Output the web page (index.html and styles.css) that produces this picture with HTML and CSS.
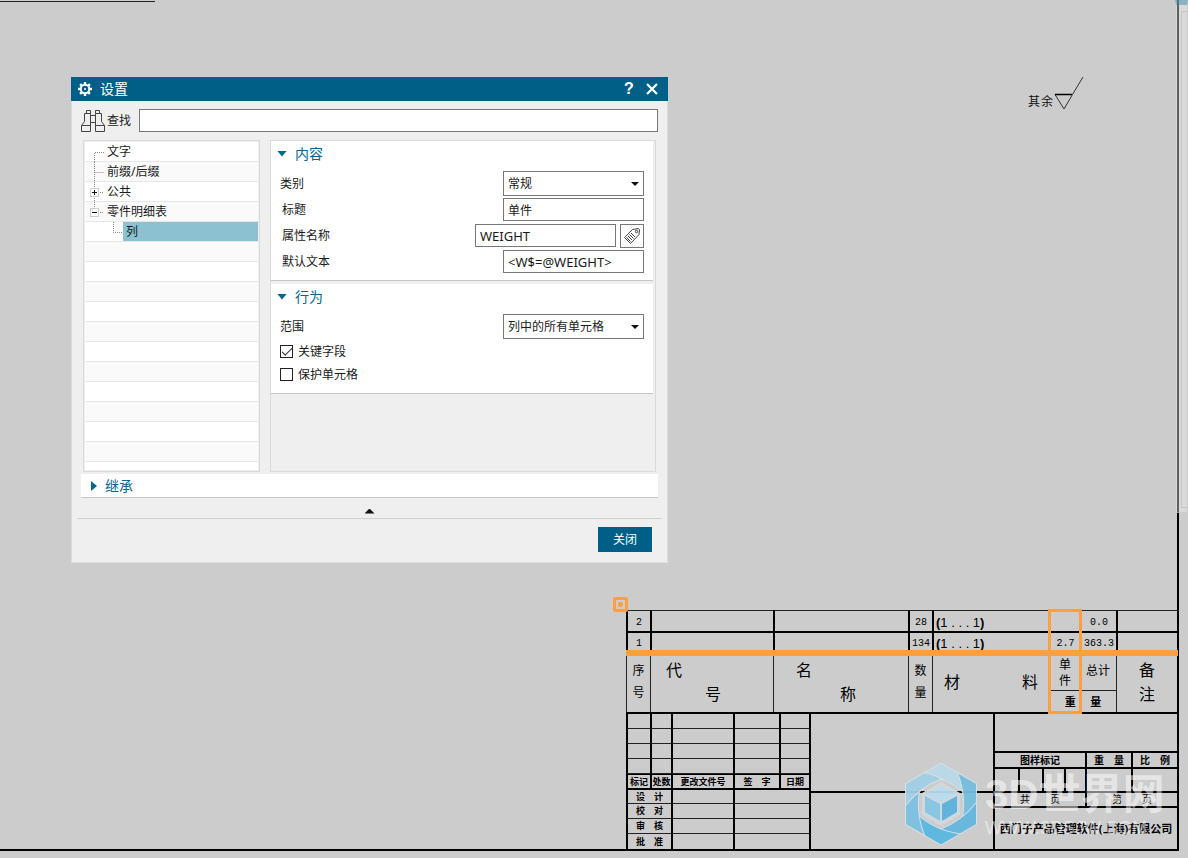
FILE: index.html
```html
<!DOCTYPE html>
<html lang="zh-CN">
<head>
<meta charset="utf-8">
<title>设置</title>
<link rel="stylesheet" href="styles.css">
</head>
<body>
<main class="sheet">
  <div class="border-tab"></div>

  <form class="dialog" aria-labelledby="dialog-title">
    <header class="titlebar">
      <svg class="gear" viewBox="0 0 14 14" width="14" height="14" aria-hidden="true">
        <g stroke="#fff" stroke-width="2.4"><path d="M7 0V14M0 7H14M2.1 2.1L11.9 11.9M11.9 2.1L2.1 11.9"/></g>
        <circle cx="7" cy="7" r="4.2" fill="#005f87" stroke="#fff" stroke-width="2"/>
        <circle cx="7" cy="7" r="1" fill="#fff"/>
      </svg>
      <h1 id="dialog-title">设置</h1>
      <button type="button" class="title-button help" aria-label="帮助">?</button>
      <button type="button" class="title-button" aria-label="关闭窗口">
        <svg viewBox="0 0 12 12" width="12" height="12"><path d="M1 1L11 11M11 1L1 11" stroke="#fff" stroke-width="2.2"/></svg>
      </button>
    </header>

    <div class="search">
      <svg viewBox="0 0 24 22" width="24" height="22" aria-hidden="true" fill="none" stroke="#444" stroke-width="1">
        <path d="M5.500 3.500V.5H9.500V3.500M3.500 3.500H9.500V21.500H.5V15.500L3.500 11.500ZM.5 15.500H9.500M14.500 3.500V.5H18.500V3.500M14.500 3.500H20.500V11.500L23.500 15.500V21.500H14.500ZM14.500 15.500H23.500M9.500 5.500H14.500M9.500 12.500H14.500"/>
      </svg>
      <label for="find">查找</label>
      <input id="find" type="text">
    </div>

    <div class="panes">
      <ul class="tree">
        <li><svg class="twig" viewBox="0 0 22 20"><path d="M9.500 20V10.500H19"/></svg>文字</li>
        <li><svg class="twig" viewBox="0 0 22 20"><path d="M9.500 0V20M9.500 10.500H19"/></svg>前缀/后缀</li>
        <li><svg class="twig" viewBox="0 0 22 20"><path d="M9.500 0V20M15 10.500H19"/><rect x="5.500" y="6.500" width="8" height="8"/><path class="sign" d="M7 10.500H12M9.500 8V13"/></svg>公共</li>
        <li><svg class="twig" viewBox="0 0 22 20"><path d="M9.500 0V6M15 10.500H19"/><rect x="5.500" y="6.500" width="8" height="8"/><path class="sign" d="M7 10.500H12"/></svg>零件明细表</li>
        <li><svg class="twig child" viewBox="0 0 38 20"><path d="M28.500 0V10.500H37"/></svg><span class="selected">列</span></li>
      </ul>

      <div class="pages">
        <section class="group">
          <h2><span class="marker"></span>内容</h2>
          <div class="field">
            <label for="category">类别</label>
            <span class="choice"><select id="category"><option>常规</option></select></span>
          </div>
          <div class="field indented">
            <label for="caption">标题</label>
            <input id="caption" type="text" value="单件">
          </div>
          <div class="field indented">
            <label for="attribute">属性名称</label>
            <input id="attribute" class="latin" type="text" value="WEIGHT">
            <button type="button" class="tag" aria-label="选择属性">
              <svg viewBox="0 0 18 18" width="18" height="18" fill="none" stroke="#444" stroke-width="1">
                <path d="M9.500 2.500L15.500 1.500L16.500 3L16 7.500L7.500 16.500L1.500 10.500Z"/><circle cx="13.500" cy="4.500" r="1.200"/>
                <path d="M3.500 10.500L7.500 14.500M5 9L9 13M6.500 7.500L10.500 11.500M8 6L12 10"/>
              </svg>
            </button>
          </div>
          <div class="field indented">
            <label for="default-text">默认文本</label>
            <input id="default-text" class="latin" type="text" value="&lt;W$=@WEIGHT&gt;">
          </div>
        </section>

        <section class="group">
          <h2><span class="marker"></span>行为</h2>
          <div class="field">
            <label for="scope">范围</label>
            <span class="choice"><select id="scope"><option>列中的所有单元格</option></select></span>
          </div>
          <label class="check"><input type="checkbox" checked>关键字段</label>
          <label class="check"><input type="checkbox">保护单元格</label>
        </section>
      </div>
    </div>

    <h2 class="inherit"><span class="marker closed"></span>继承</h2>
    <div class="collapse"><span class="up"></span></div>
    <footer><button type="button" class="close">关闭</button></footer>
  </form>

  <div class="roughness">
    <span>其</span><span>余</span>
    <svg viewBox="0 0 30 36" width="30" height="36" aria-hidden="true"><g fill="none" stroke="#333"><path d="M1 18.500H18.500L10 33ZM18.500 18.500L29 1"/><path d="M1 18.500H18" stroke="#000" stroke-width="1.500"/></g></svg>
  </div>

  <div class="drawing">
    <table class="parts">
      <colgroup><col class="c24"><col class="c123"><col class="c135"><col class="c24"><col class="c117"><col class="c31"><col class="c36"><col></colgroup>
      <tbody>
        <tr><td>2</td><td></td><td></td><td>28</td><td class="range"><b>(</b>1 . . . 1<b>)</b></td><td></td><td>0.0</td><td></td></tr>
        <tr><td>1</td><td></td><td></td><td>134</td><td class="range"><b>(</b>1 . . . 1<b>)</b></td><td>2.7</td><td>363.3</td><td></td></tr>
      </tbody>
      <tfoot>
        <tr>
          <th rowspan="2" class="small">序<br>号</th>
          <th rowspan="2"><div class="stagger"><span>代</span><span>号</span></div></th>
          <th rowspan="2"><div class="stagger wide"><span>名</span><span>称</span></div></th>
          <th rowspan="2" class="small">数<br>量</th>
          <th rowspan="2"><div class="spread"><span>材</span><span>料</span></div></th>
          <th class="unit">单<br>件</th>
          <th class="total">总计</th>
          <th rowspan="2" class="note">备<br>注</th>
        </tr>
        <tr><th colspan="2" class="weight"><div><span>重</span><span>量</span></div></th></tr>
      </tfoot>
    </table>

    <div class="title-block">
      <table class="revisions">
        <colgroup><col class="c24"><col class="c21"><col class="c62"><col class="c46"><col></colgroup>
        <tr><td></td><td></td><td></td><td></td><td></td></tr>
        <tr><td></td><td></td><td></td><td></td><td></td></tr>
        <tr><td></td><td></td><td></td><td></td><td></td></tr>
        <tr><td></td><td></td><td></td><td></td><td></td></tr>
        <tr class="heads"><th>标记</th><th>处数</th><th>更改文件号</th><th>签　字</th><th>日期</th></tr>
        <tr class="heads"><th colspan="2">设　计</th><td></td><td colspan="2"></td></tr>
        <tr><th colspan="2">校　对</th><td></td><td colspan="2"></td></tr>
        <tr><th colspan="2">审　核</th><td></td><td colspan="2"></td></tr>
        <tr><th colspan="2">批　准</th><td></td><td colspan="2"></td></tr>
      </table>
      <div class="middle"><div></div><div></div></div>
      <div class="company">
        <div class="blank"></div>
        <div class="marks heading"><span>图样标记</span><span>重　量</span><span>比　例</span></div>
        <div class="marks stage"><div class="quarters"><i></i><i></i><i></i><i></i></div><span></span><span></span></div>
        <div class="pagination"><span>共　　页</span><span>第　　页</span></div>
        <div class="name">西门子产品管理软件(上海)有限公司</div>
      </div>
    </div>

    <div class="column-highlight"></div>
    <div class="row-highlight"></div>
    <div class="handle"></div>
  </div>
</main>

<aside class="ghost-window"><div></div></aside>

<div class="watermark">
  <svg viewBox="0 0 72 82" width="72" height="82" aria-hidden="true">
    <defs><path id="petal" d="M17 11L36 0L55 11Q58 20 58 29Q42 15 17 11Z" stroke="#d8e2e6" stroke-width="1"/></defs>
    <use href="#petal" fill="#bad9e7"/>
    <use href="#petal" fill="#76bee0" transform="rotate(60 36 41)"/>
    <use href="#petal" fill="#64b6de" transform="rotate(120 36 41)"/>
    <use href="#petal" fill="#5ab7e2" transform="rotate(180 36 41)"/>
    <use href="#petal" fill="#7cc0e2" transform="rotate(240 36 41)"/>
    <use href="#petal" fill="#a1cfe5" transform="rotate(300 36 41)"/>
    <path d="M36 19L55 30V52L36 63L17 52V30Z" fill="#d0dade"/>
    <path d="M36 23L51 31L36 39L21 31Z" fill="#b8dced"/>
    <path d="M20 33L35 41V58L20 49Z" fill="#86c6e5"/>
    <path d="M52 33L37 41V58L52 49Z" fill="#5cb2dc"/>
  </svg>
  <div class="brand"><strong>3D世界网</strong><span>WWW.3DSJW.COM</span></div>
</div>
</body>
</html>
```

FILE: styles.css
```css
* { box-sizing: border-box; }

body {
  margin: 0;
  background: #ccc;
  color: #1a1a1a;
  font: 12px/18px "Noto Sans", "Noto Sans CJK SC", sans-serif;
  position: relative;
  min-height: 100vh;
  overflow: hidden;
}

h1, h2 { margin: 0; font-weight: 400; }
button, input, select { font: inherit; color: inherit; border-radius: 0; margin: 0; }

/* Drawing sheet: frame lines on the right and the bottom */
.sheet {
  position: relative;
  display: flex;
  flex-direction: column;
  justify-content: space-between;
  min-height: calc(100vh - 7px);
  margin-right: 9px;
  padding-top: 77px;
  border: solid #000;
  border-width: 0 2px 2px 0;
}

.border-tab {
  position: absolute;
  top: 0;
  left: 0;
  width: 155px;
  height: 2px;
  border-bottom: 1px solid #222;
}

/* Settings dialog */
.dialog {
  width: calc(50vw + 3px);
  min-width: 480px;
  margin-left: 71px;
  background: #efefef;
  border: 1px solid #dcdcdc;
  border-top: 0;
}

.titlebar {
  display: flex;
  align-items: center;
  height: 24px;
  margin: 0 -1px;
  padding: 0 8px 0 7px;
  background: #005f87;
  color: #fff;
}
.titlebar h1 { flex: 1; margin-left: 8px; font-size: 14px; line-height: 24px; }
.title-button {
  display: flex;
  align-items: center;
  justify-content: center;
  width: 16px;
  height: 20px;
  margin-left: 7px;
  padding: 0;
  border: 0;
  background: none;
}
.help { font: bold 16px/20px "Liberation Sans", sans-serif; }

.search { display: flex; align-items: center; padding: 8px 9px 8px 9px; }
.search label { margin: 0 8px 0 2px; }
.search input { flex: 1; height: 23px; }

input[type="text"], select {
  border: 1px solid #777;
  background: #fff;
  padding: 0 4px;
  outline: 0;
}

.panes { display: flex; gap: 10px; padding: 0 11px; }

.tree {
  width: 177px;
  height: 332px;
  margin: 0;
  padding: 1px;
  list-style: none;
  border: 1px solid #dadada;
  background: repeating-linear-gradient(#fff 0 19px, #e6e6e6 19px 20px, #fafafa 20px 39px, #e6e6e6 39px 40px) content-box #fff;
}
.tree li { display: flex; height: 20px; line-height: 19px; }
.twig { flex: none; width: 22px; height: 20px; fill: none; }
.twig.child { width: 38px; }
.twig path { stroke: #888; stroke-dasharray: 1 1; }
.twig rect { stroke: #ccc; fill: #fff; }
.twig .sign { stroke: #111; stroke-dasharray: none; }
.selected { flex: 1; height: 19px; padding-left: 3px; background: #8bc1d1; }

.pages { flex: 1; padding-right: 2px; border: 1px solid #dadada; }
.group {
  margin-bottom: 3px;
  padding: 0 9px 5px;
  background: #fff;
  border-bottom: 1px solid #c6c6c6;
}
.group + .group { padding-bottom: 7px; }
.group h2, .inherit { display: flex; align-items: center; font-size: 14px; color: #00668c; }
.group h2 { height: 25px; gap: 8px; margin: 0 0 5px -3px; }
.marker {
  width: 10px;
  height: 6px;
  background: #00668c;
  clip-path: polygon(0 0, 100% 0, 50% 100%);
}
.marker.closed { width: 6px; height: 10px; margin-left: 1px; clip-path: polygon(0 0, 100% 50%, 0 100%); }

.field { display: flex; align-items: center; justify-content: flex-end; min-height: 25px; margin-bottom: 1px; }
.field label { flex: 1; }
.field.indented label { padding-left: 2px; }
.field input { width: 141px; height: 23px; }
.field .latin { font-size: 13px; }
.choice { position: relative; width: 141px; }
.choice select { display: block; width: 100%; height: 25px; appearance: none; }
.choice::after {
  content: "";
  position: absolute;
  right: 5px;
  top: 11px;
  width: 8px;
  height: 4px;
  background: #111;
  clip-path: polygon(0 0, 100% 0, 50% 100%);
}
.tag {
  display: flex;
  align-items: center;
  justify-content: center;
  width: 24px;
  height: 24px;
  margin-left: 4px;
  padding: 0;
  border: 1px solid #777;
  background: #fff;
}

.check { display: flex; align-items: center; gap: 5px; height: 23px; }
.check input {
  width: 13px;
  height: 13px;
  appearance: none;
  border: 1px solid #222;
  background: #fff;
}
.check input:checked::after {
  content: "";
  display: block;
  width: 9px;
  height: 4px;
  margin: 2px 0 0 1px;
  border: solid #333;
  border-width: 0 0 1px 1px;
  rotate: -45deg;
}

.inherit { height: 24px; gap: 8px; margin: 2px 9px 0; padding: 1px 0 0 9px; background: #fff; border-bottom: 1px solid #c6c6c6; }
.collapse { display: flex; justify-content: center; align-items: center; height: 21px; margin: 0 5px; padding-top: 6px; border-bottom: 1px solid #d0d0d0; }
.up { width: 10px; height: 5px; background: #111; clip-path: polygon(50% 0, 100% 100%, 0 100%); }
footer { display: flex; justify-content: flex-end; padding: 8px 15px 10px; }
.close { width: 54px; height: 25px; padding: 0; border: 0; background: #005f87; color: #fff; }

/* Surface finish symbol on the sheet */
.roughness {
  position: absolute;
  top: 76px;
  right: 93px;
  display: flex;
  align-items: flex-end;
  color: #111;
  line-height: 20px;
}
.roughness span { width: 13px; }

/* Parts list and title block */
.drawing {
  position: relative;
  align-self: flex-end;
  width: 551px;
  color: #000;
}
table { width: 100%; table-layout: fixed; border-spacing: 0; border-collapse: separate; }
td, th { padding: 0; font-weight: 400; text-align: center; }
.c21 { width: 21px; }
.c24 { width: 24px; }
.c31 { width: 31px; }
.c36 { width: 36px; }
.c46 { width: 46px; }
.c62 { width: 62px; }
.c117 { width: 117px; }
.c123 { width: 123px; }
.c135 { width: 135px; }

.parts td {
  height: 21px;
  padding-top: 3px;
  border-left: 2px solid #000;
  border-top: 1px solid #222;
  font: 10px/16px "Liberation Mono", monospace;
}
.parts tr + tr td { border-top: 2px solid #000; }
.parts td:nth-child(6), .parts td:nth-child(7) { border-left-color: transparent; }
.parts td.range { padding-left: 2px; text-align: left; font: 13px/16px "Liberation Sans", sans-serif; }
.parts th { border-left: 1px solid #222; font-size: 16px; line-height: 22px; }
.parts tfoot tr:first-child { height: 38px; }
.parts tfoot tr:last-child { height: 22px; }
.parts .small { font-size: 12px; }
.parts .unit { font-size: 12px; line-height: 16px; padding-top: 3px; }
.parts .total { border-left: 0; font-size: 12px; }
.parts .weight { border-top: 1px solid #222; font-size: 11px; font-weight: 700; line-height: 20px; }
.weight div { display: flex; justify-content: space-evenly; }
.parts .note { line-height: 24px; }
.stagger { display: flex; justify-content: space-between; height: 46px; padding: 0 52px 0 15px; }
.stagger.wide { padding-left: 22px; }
.stagger span:last-child { align-self: flex-end; }
.spread { display: flex; justify-content: space-between; padding: 0 11px; }

.title-block { display: grid; grid-template-columns: 183px 184px 184px; height: 137px; border-top: 2px solid #000; }
.revisions { height: 135px; font-size: 9px; line-height: 12px; font-weight: 700; }
.revisions td, .revisions th { height: 15px; border-left: 2px solid #000; border-bottom: 1px solid #222; font-weight: 700; }
.revisions .heads > * { border-top: 1px solid #000; }
.revisions .heads:nth-child(5) > * { border-bottom: 1px solid #000; }
.revisions tr:last-child > * { border-bottom: 0; }
.middle { display: grid; grid-template-rows: 77px 1fr; border-left: 2px solid #000; }
.middle div + div { border-top: 2px solid #000; }

.company { display: grid; grid-template-rows: 37px 16px 24px 15px 1fr; border-left: 2px solid #000; font-size: 10px; line-height: 14px; font-weight: 700; text-align: center; }
.company > div + div { border-top: 2px solid #000; }
.marks { display: grid; grid-template-columns: 90px 46px 1fr; }
.marks > span { border-left: 2px solid #000; }
.marks > span:first-child { border-left: 0; }
.quarters { display: grid; grid-template-columns: 23px 24px 22px 1fr; }
.quarters i + i { border-left: 2px solid #000; }
.pagination { display: grid; grid-template-columns: 90px 1fr; font-weight: 400; line-height: 13px; }
.pagination span + span { border-left: 2px solid #000; }
.name { font-size: 11px; line-height: 42px; white-space: nowrap; }

/* Selection marks of the active column */
.column-highlight { position: absolute; left: 422px; top: -1px; width: 34px; height: 105px; border: 3px solid #ff9f3f; }
.row-highlight { position: absolute; left: 0; right: -1px; top: 40px; height: 6px; background: #ff9f3f; }
.handle { position: absolute; left: -13px; top: -13px; width: 15px; height: 15px; border: 3px solid #ff9f3f; border-radius: 2px; }
.handle::after {
  content: "";
  position: absolute;
  inset: 2px;
  background: #ff9f3f;
  border-radius: 2px;
}

/* Faded window at the right edge */
.ghost-window { position: absolute; top: 0; right: 0; width: 13px; height: 513px; background: rgb(240 240 240 / 40%); border: 1px solid rgb(190 190 190 / 50%); border-top: 5px solid rgb(60 140 170 / 50%); }
.ghost-window div { height: 497px; margin: 6px 0 0 5px; border: 1px solid rgb(180 180 180 / 50%); border-right: 0; }

.watermark { position: absolute; right: 20px; bottom: 13px; display: flex; gap: 8px; width: 263px; }
.watermark svg { flex: none; opacity: .95; }
.brand { display: flex; flex-direction: column; color: rgb(255 255 255 / 50%); white-space: nowrap; }
.brand strong { font: bold 42px/48px "Liberation Sans", "Noto Sans CJK SC", sans-serif; margin-top: 8px; }
.brand span { font: 18px/18px "Liberation Sans", sans-serif; }
```
